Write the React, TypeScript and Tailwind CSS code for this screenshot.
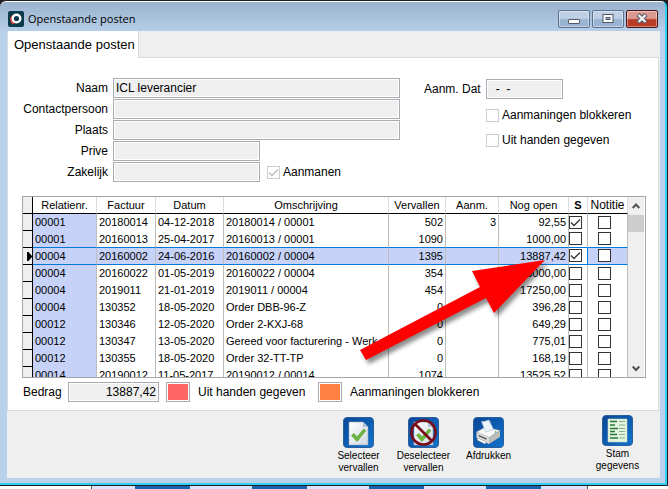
import { useState } from 'react';
import type { ReactNode } from 'react';
import clsx from 'clsx';

interface Row {
  relation: string;
  invoice: string;
  date: string;
  description: string;
  overdue: string;
  reminders: string;
  open: string;
  checked: boolean;
}

const initialRows: Row[] = [
  { relation: '00001', invoice: '20180014', date: '04-12-2018', description: '20180014 / 00001', overdue: '502', reminders: '3', open: '92,55', checked: true },
  { relation: '00001', invoice: '20160013', date: '25-04-2017', description: '20160013 / 00001', overdue: '1090', reminders: '', open: '1000,00', checked: false },
  { relation: '00004', invoice: '20160002', date: '24-06-2016', description: '20160002 / 00004', overdue: '1395', reminders: '', open: '13887,42', checked: true },
  { relation: '00004', invoice: '20160022', date: '01-05-2019', description: '20160022 / 00004', overdue: '354', reminders: '', open: '5000,00', checked: false },
  { relation: '00004', invoice: '2019011', date: '21-01-2019', description: '2019011 / 00004', overdue: '454', reminders: '', open: '17250,00', checked: false },
  { relation: '00004', invoice: '130352', date: '18-05-2020', description: 'Order DBB-96-Z', overdue: '0', reminders: '', open: '396,28', checked: false },
  { relation: '00012', invoice: '130346', date: '12-05-2020', description: 'Order 2-KXJ-68', overdue: '0', reminders: '', open: '649,29', checked: false },
  { relation: '00012', invoice: '130347', date: '13-05-2020', description: 'Gereed voor facturering - Werk', overdue: '0', reminders: '', open: '775,01', checked: false },
  { relation: '00012', invoice: '130355', date: '18-05-2020', description: 'Order 32-TT-TP', overdue: '0', reminders: '', open: '168,19', checked: false },
  { relation: '00014', invoice: '20190012', date: '11-05-2017', description: '20190012 / 00014', overdue: '1074', reminders: '', open: '13525,52', checked: false },
];

const inputClass =
  'h-5 min-w-0 border border-[#a9abb0] bg-[#efefef] px-[2px] text-xs text-black shadow-[inset_0_0_0_1px_#fff] outline-none';

function Check({ checked, disabled, label, onChange }: {
  checked: boolean;
  disabled?: boolean;
  label?: string;
  onChange?: () => void;
}) {
  return (
    <span className="relative inline-block h-[13px] w-[13px] shrink-0 align-top">
      <input
        type="checkbox"
        aria-label={label}
        checked={checked}
        disabled={disabled}
        onChange={onChange}
        className={clsx(
          'block h-[13px] w-[13px] appearance-none border bg-white',
          disabled ? 'border-[#cccccc]' : 'border-[#333333]'
        )}
      />
      {checked && (
        <svg className="pointer-events-none absolute inset-0 h-[13px] w-[13px]" viewBox="0 0 13 13" fill="none">
          <path d="M2 6.5l3 3L11 3.5" stroke={disabled ? '#bdbdbd' : '#333333'} strokeWidth="1.3" />
        </svg>
      )}
    </span>
  );
}

function Field({ id, label, value, short, children }: {
  id: string;
  label: string;
  value?: string;
  short?: boolean;
  children?: ReactNode;
}) {
  return (
    <div className="flex items-center">
      <label htmlFor={id} className="w-[105px] shrink-0 pr-[5px] text-right">{label}</label>
      <input id={id} readOnly defaultValue={value} className={clsx(inputClass, short ? 'w-[147px]' : 'flex-1')} />
      {children}
    </div>
  );
}

function IconTile({ children }: { children: ReactNode }) {
  return (
    <svg className="h-[31px] w-[31px]" viewBox="0 0 31 31">
      <defs>
        <linearGradient id="tile" x1="0" y1="0" x2="1" y2="1">
          <stop offset="0" stopColor="#0a4696" />
          <stop offset="1" stopColor="#1173cc" />
        </linearGradient>
        <linearGradient id="sheet" x1="0" y1="0" x2="1" y2="1">
          <stop offset="0" stopColor="#ffffff" />
          <stop offset="1" stopColor="#cfd9e2" />
        </linearGradient>
      </defs>
      <rect x=".5" y=".5" width="30" height="30" rx="3.5" fill="url(#tile)" stroke="#2a5f9e" />
      {children}
    </svg>
  );
}

function CheckedSheet() {
  return (
    <>
      <path d="M6 5h14l5 5v18H6z" fill="url(#sheet)" stroke="#8fa6bd" strokeWidth=".6" />
      <path d="M20 5v5h5z" fill="#b5c3d2" />
      <path d="M8.5 18.5l2.5-2 3 3.4 6.8-8 2 1.8L14 24.5z" fill="#6cb83c" stroke="#4c962a" strokeWidth=".6" />
    </>
  );
}

function SelectIcon() {
  return <IconTile><CheckedSheet /></IconTile>;
}

function DeselectIcon() {
  return (
    <IconTile>
      <CheckedSheet />
      <circle cx="15.5" cy="15.5" r="12" fill="none" stroke="#780c18" strokeWidth="2.6" />
      <path d="M7 7l17 17" stroke="#780c18" strokeWidth="2.6" />
    </IconTile>
  );
}

function PrinterIcon() {
  return (
    <IconTile>
      <path d="M3.500 15l9-5 14.500 3.500-11 7z" fill="#f7f7f5" stroke="#999" strokeWidth=".5" />
      <path d="M8.500 4.500l2.500 0 5-1.500 4.500 9.500-8 2.500z" fill="#eef4fb" stroke="#a9bdd2" strokeWidth=".6" />
      <path d="M16 3l.5 3.500 2-.5z" fill="#9fb4ca" />
      <path d="M3.500 15L16 20.500V27L3.500 21z" fill="#dededb" />
      <path d="M16 20.500l11-7V20l-11 7z" fill="#bcbcb9" />
      <path d="M5.500 18.500l8 3.600" stroke="#4a4a4a" strokeWidth="1.300" />
      <path d="M5 21l8.500 4-1.500 2-8-4z" fill="#fff" stroke="#888" strokeWidth=".5" />
      <circle cx="22.500" cy="15" r=".8" fill="#3aa23a" />
    </IconTile>
  );
}

function MasterDataIcon() {
  return (
    <IconTile>
      <path d="M6 4h19v23H6z" fill="#e6f5e0" stroke="#b8d4b6" strokeWidth=".6" />
      <path d="M8 6.500h7M8 10h5M8 13.500h8M8 16.500h5M8 19.500h7M8 23h8" stroke="#27783a" strokeWidth="1.600" />
      <path d="M17 6.500h6M17 10h6M17 13.500h6M17 16.500h6M17 19.500h6M17 23h6" stroke="#7fb18a" />
    </IconTile>
  );
}

function ToolButton({ icon, lines }: { icon: ReactNode; lines: string[] }) {
  return (
    <button className="flex w-[65px] flex-col items-center text-[10px] leading-3">
      {icon}
      <span className="mt-[2px] block">
        {lines.map((line) => (
          <span key={line} className="block">{line}</span>
        ))}
      </span>
    </button>
  );
}

function TitleBar() {
  const frame =
    'grid h-[18px] w-8 place-items-center rounded-[2px] border shadow-[inset_0_0_0_1px_rgba(255,255,255,0.4)]';
  const plain = 'border-[#5b718c] bg-linear-to-b from-[#bdd0e5] from-45% to-[#98b4d2] to-55%';
  return (
    <header className="flex h-[29px] items-center pt-[5px] pr-[2px] pl-px">
      <svg className="h-4 w-4" viewBox="0 0 16 16">
        <rect width="16" height="16" rx="2" fill="#0b3b4a" />
        <path d="M5 3.200Q-.5 8 4.500 13.300L8 12 4.500 8z" fill="#d9483b" />
        <circle cx="8.500" cy="7.500" r="3.800" fill="none" stroke="#fff" strokeWidth="2.400" />
      </svg>
      <h1 className="ml-1 flex-1 font-['Open_Sans',sans-serif] text-[11px]">Openstaande posten</h1>
      <div className="flex gap-[2px]">
        <button aria-label="Minimaliseren" className={clsx(frame, plain)}>
          <svg className="h-3 w-3" viewBox="0 0 12 12">
            <rect x=".5" y="6.500" width="11" height="4" rx=".5" fill="#fff" stroke="#535666" />
          </svg>
        </button>
        <button aria-label="Maximaliseren" className={clsx(frame, plain)}>
          <svg className="h-3 w-3" viewBox="0 0 12 12">
            <rect x="1" y="1.500" width="10" height="8" fill="#fff" stroke="#535666" />
            <rect x="4" y="4.500" width="4" height="2" fill="#8fa9c8" stroke="#535666" />
          </svg>
        </button>
        <button
          aria-label="Sluiten"
          className={clsx(frame, 'border-[#4d1215] bg-linear-to-b from-[#dd9a91] from-45% to-[#bb3c26] to-55%')}
        >
          <svg className="h-3 w-3" viewBox="0 0 12 12">
            <path d="M2 1.500l8 8M10 1.500l-8 8" stroke="#535666" strokeWidth="4.400" />
            <path d="M2.500 2l7 7M9.500 2l-7 7" stroke="#f4f4f4" strokeWidth="2.400" />
          </svg>
        </button>
      </div>
    </header>
  );
}

const th = 'h-[17px] border-r border-b border-r-[#dcdcdc] border-b-black bg-white p-0 text-center';

export default function App() {
  const [rows, setRows] = useState(initialRows);
  const [current, setCurrent] = useState(2);

  const toggle = (index: number) =>
    setRows(rows.map((row, i) => (i === index ? { ...row, checked: !row.checked } : row)));

  return (
    <div className="flex min-h-screen flex-col bg-[#1e2024] font-['Liberation_Sans',Arial,sans-serif] text-xs leading-4 text-black">
      <div className="relative mt-px mr-px mb-px flex flex-1 flex-col rounded-t-md border-t border-r-2 border-b-2 border-t-white border-r-[#35cdf0] border-b-[#35cdf0] bg-linear-to-b from-[#9ab3ce] to-[#b9d1ea] to-[32px] pr-[5px] pb-[5px] pl-[7px]">
        <TitleBar />

        {/* Tabs */}
        <div className="flex bg-[#efefef]">
          <button className="h-[27px] w-[132px] border-r border-l border-[#d9d9d9] bg-white px-[6px] text-left text-[13px] whitespace-nowrap">
            Openstaande posten
          </button>
          <div className="mr-px flex-1 border-b border-[#d9d9d9]" />
        </div>

        <div className="flex flex-1 flex-col bg-[#efefef]">
          <main className="mr-px border-r border-b border-l border-[#d9d9d9] bg-white pt-5 pb-2">
            <div className="flex gap-6">
              <div className="flex flex-1 flex-col gap-px">
                <Field id="naam" label="Naam" value="ICL leverancier" />
                <Field id="contact" label="Contactpersoon" />
                <Field id="plaats" label="Plaats" />
                <Field id="prive" label="Prive" short />
                <Field id="zakelijk" label="Zakelijk" short>
                  <label className="ml-[7px] flex items-center gap-[3px]">
                    <Check checked disabled />
                    Aanmanen
                  </label>
                </Field>
              </div>
              <div className="flex w-[234px] flex-col">
                <div className="mt-px flex items-center">
                  <label htmlFor="aanmdat" className="w-[62px]">Aanm. Dat</label>
                  <input id="aanmdat" readOnly defaultValue="  -  -" className={clsx(inputClass, 'w-[77px]')} />
                </div>
                <label className="mt-2 ml-[62px] flex items-center gap-[3px]">
                  <Check checked={false} disabled />
                  Aanmaningen blokkeren
                </label>
                <label className="mt-[9px] ml-[62px] flex items-center gap-[3px]">
                  <Check checked={false} disabled />
                  Uit handen gegeven
                </label>
              </div>
            </div>

            {/* Open items grid */}
            <div className="mt-[14px] mr-3 ml-[14px] flex h-[182px] overflow-hidden border border-[#a6a6a6]">
              <table className="w-full flex-1 table-fixed border-separate border-spacing-0 self-start text-[11px] leading-[15px]">
                <colgroup>
                  <col className="w-[10px]" />
                  <col className="w-[64px]" />
                  <col className="w-[59px]" />
                  <col className="w-[68px]" />
                  <col />
                  <col className="w-[57px]" />
                  <col className="w-[53px]" />
                  <col className="w-[70px]" />
                  <col className="w-[19px]" />
                  <col className="w-[40px]" />
                </colgroup>
                <thead>
                  <tr>
                    <th className="h-[17px] border-r border-b border-r-black border-b-black bg-[#efefef] p-0" />
                    <th className={clsx(th, 'font-normal')}>Relatienr.</th>
                    <th className={clsx(th, 'font-normal')}>Factuur</th>
                    <th className={clsx(th, 'font-normal')}>Datum</th>
                    <th className={clsx(th, 'font-normal')}>Omschrijving</th>
                    <th className={clsx(th, 'font-normal')}>Vervallen</th>
                    <th className={clsx(th, 'font-normal')}>Aanm.</th>
                    <th className={clsx(th, 'font-normal')}>Nog open</th>
                    <th className={clsx(th, 'font-bold')}>S</th>
                    <th className={clsx(th, 'text-xs font-normal')}>Notitie</th>
                  </tr>
                </thead>
                <tbody>
                  {rows.map((row, i) => {
                    const active = i === current;
                    // the row above draws the top line of the active row
                    const line = active || i === current - 1 ? 'border-b border-b-[#0078d7]' : '';
                    const td = clsx(
                      'h-[17px] overflow-hidden border-r border-r-[#bdbdbd] p-0 px-[2px] whitespace-nowrap',
                      active && 'bg-[#c6d2f8]',
                      line
                    );
                    return (
                      <tr key={row.invoice} onClick={() => setCurrent(i)}>
                        <td className="h-[17px] border-r border-b border-black bg-[#efefef] p-0">
                          {active && (
                            <svg className="ml-1 h-[9px] w-[5px]" viewBox="0 0 5 9">
                              <path d="M0 0v9h1.500L5 5V4L1.500 0z" fill="#000" />
                            </svg>
                          )}
                        </td>
                        <td className={clsx(td, !active && 'bg-[#c6d2f8]')}>{row.relation}</td>
                        <td className={td}>{row.invoice}</td>
                        <td className={td}>{row.date}</td>
                        <td className={td}>{row.description}</td>
                        <td className={clsx(td, 'text-right')}>{row.overdue}</td>
                        <td className={clsx(td, 'text-right')}>{row.reminders}</td>
                        <td className={clsx(td, 'text-right')}>{row.open}</td>
                        <td
                          className={clsx(
                            'h-[17px] border-r p-0 pt-px align-middle',
                            active ? 'border-r-[#0078d7] bg-white' : 'border-r-[#bdbdbd]',
                            line
                          )}
                        >
                          <Check label="Selecteer" checked={row.checked} onChange={() => toggle(i)} />
                        </td>
                        <td className={clsx(td, 'pt-px pr-2 text-center', active && 'border-r-[#0078d7]')}>
                          <Check label="Notitie" checked={false} onChange={() => undefined} />
                        </td>
                      </tr>
                    );
                  })}
                </tbody>
              </table>
              {/* Scrollbar */}
              <div className="mr-px flex w-4 flex-col items-center bg-[#efefef]">
                <svg className="h-[18px] w-2" viewBox="0 0 8 18" fill="none">
                  <path d="M.7 11L4 7.500 7.300 11" stroke="#505050" strokeWidth="2" />
                </svg>
                <div className="h-[17px] w-full bg-[#cdcdcd]" />
                <svg className="mt-auto h-[18px] w-2" viewBox="0 0 8 18" fill="none">
                  <path d="M.7 7.500L4 11l3.300-3.500" stroke="#505050" strokeWidth="2" />
                </svg>
              </div>
            </div>

            <div className="mt-1 flex items-center pl-[15px]">
              <label htmlFor="bedrag" className="w-[45px]">Bedrag</label>
              <input id="bedrag" readOnly defaultValue="13887,42" className={clsx(inputClass, 'w-[91px] text-right')} />
              <span className="ml-[7px] h-5 w-6 border border-[#a9abb0] bg-[#ff6666] shadow-[inset_0_0_0_1px_#fff]" />
              <span className="ml-2 w-[120px]">Uit handen gegeven</span>
              <span className="h-5 w-6 border border-[#a9abb0] bg-[#ff8040] shadow-[inset_0_0_0_1px_#fff]" />
              <span className="ml-2">Aanmaningen blokkeren</span>
            </div>
          </main>

          <footer className="flex items-start justify-end pt-[6px] pr-[10px]">
            <ToolButton icon={<SelectIcon />} lines={['Selecteer', 'vervallen']} />
            <ToolButton icon={<DeselectIcon />} lines={['Deselecteer', 'vervallen']} />
            <ToolButton icon={<PrinterIcon />} lines={['Afdrukken']} />
            <div className="-mt-[2px] ml-16">
              <ToolButton icon={<MasterDataIcon />} lines={['Stam', 'gegevens']} />
            </div>
          </footer>
        </div>

        {/* Pointer to the open amount */}
        <svg
          className="pointer-events-none absolute top-[258px] right-[117px] h-[110px] w-[190px] drop-shadow-[3px_4px_2px_rgba(0,0,0,0.45)]"
          viewBox="358 260 190 110"
        >
          <path d="M545 260L472 271l8 16L360 350l6 10L486 298l8 15z" fill="#ff0000" />
        </svg>
      </div>

      {/* Desktop strip below the window */}
      <div className="flex h-[3px] bg-white pl-[91px]">
        <div className="flex w-[497px] gap-[62px] border-r border-l border-[#555] bg-[#dbe3fb] pl-[43px]">
          <div className="w-[55px] bg-[#1763ad]" />
          <div className="w-[55px] bg-[#1763ad]" />
          <div className="w-[55px] bg-[#1763ad]" />
          <div className="w-[55px] bg-[#1763ad]" />
        </div>
      </div>
    </div>
  );
}
